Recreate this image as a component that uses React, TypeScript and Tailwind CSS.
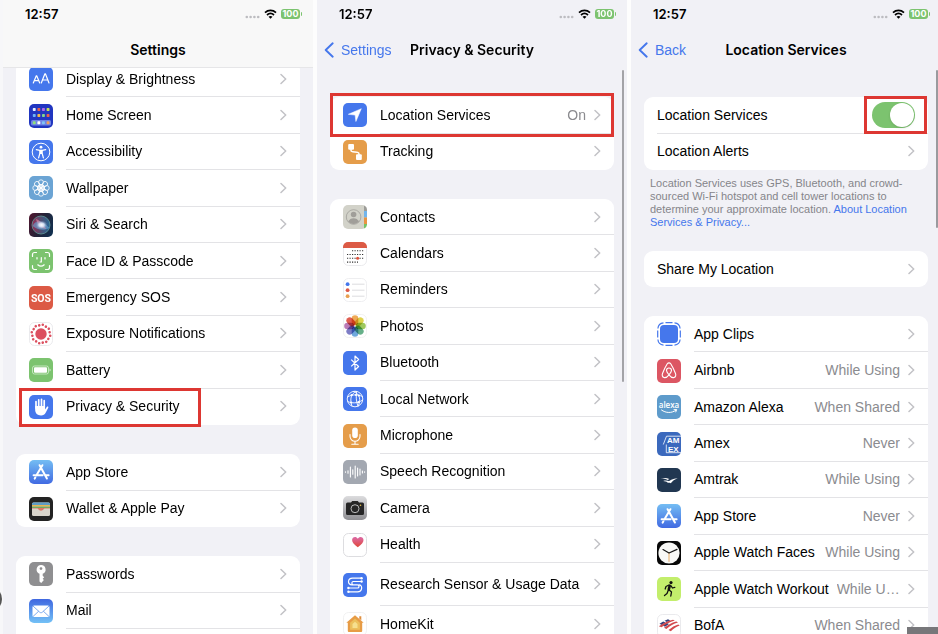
import type { ReactNode } from 'react';

const WHITE = '#ffffff';
const BLUE = '#4577ec';
const RING = [0, 45, 90, 135, 180, 225, 270, 315];

function Tile({ fill, edge, children }: { fill: string; edge?: string; children?: ReactNode }) {
  return (
    <svg viewBox="0 0 24 24" className="size-6 shrink-0 self-center" aria-hidden="true">
      <rect x={edge ? 0.5 : 0} y={edge ? 0.5 : 0} width={edge ? 23 : 24} height={edge ? 23 : 24} rx="5" fill={fill} stroke={edge ?? 'none'} strokeWidth={edge ? 0.8 : 0} />
      {children}
    </svg>
  );
}

const DisplayIcon = () => (
  <Tile fill={BLUE}>
    <g fill="none" stroke={WHITE} strokeWidth="1.2" strokeLinejoin="round" strokeLinecap="round">
      <path d="M4.3 16 7.3 8.8h.4L10.7 16M5.4 13.6h4.2" />
      <path d="M12.3 16 15.9 6.8h.5L20 16M13.5 13h5.3" />
    </g>
  </Tile>
);

const HomeScreenIcon = () => {
  const colours = ['#e8f0ff', '#e8604c', '#b06be8', '#c6e05a', '#6fb4f5', '#f2b84b', '#7fd48c', '#e8604c', '#8ee07a', '#ffffff', '#7fc4f5', '#f0a060'];
  return (
    <Tile fill="#2136c0">
      <rect x="2" y="16" width="20" height="5.6" rx="1.5" fill="#6f83e6" />
      {colours.map((c, i) => (
        <rect key={i} x={3.8 + (i % 4) * 4.6} y={[4, 10, 17.3][Math.floor(i / 4)]} width="2.9" height="2.9" rx="0.7" fill={c} />
      ))}
    </Tile>
  );
};

const AccessibilityIcon = () => (
  <Tile fill={BLUE}>
    <circle cx="12" cy="12" r="8.8" fill="none" stroke={WHITE} strokeWidth="1" />
    <circle cx="12" cy="7.2" r="1.4" fill={WHITE} />
    <path d="M7.3 9.7 10.8 10.4V13.5L9.6 17.8M16.7 9.7 13.2 10.4V13.5L14.4 17.8M10.8 10.4h2.4M10.8 13.5h2.4M12 10v3.5" fill="none" stroke={WHITE} strokeWidth="1.2" strokeLinecap="round" strokeLinejoin="round" />
  </Tile>
);

const WallpaperIcon = () => (
  <Tile fill="#6ba4d4">
    <g fill="none" stroke={WHITE} strokeWidth="0.8">
      {RING.map((a) => (
        <g key={a} transform={`rotate(${a} 12 12)`}>
          <circle cx="12" cy="6.3" r="2.5" />
          <circle cx="12" cy="10" r="1.6" />
        </g>
      ))}
    </g>
  </Tile>
);

const SiriIcon = () => (
  <svg viewBox="0 0 24 24" className="size-6 shrink-0 self-center" aria-hidden="true">
    <defs>
      <linearGradient id="siriBase" x1="0" y1="0.3" x2="1" y2="0.7">
        <stop offset="0" stopColor="#4a1830" />
        <stop offset="0.5" stopColor="#232338" />
        <stop offset="1" stopColor="#12304f" />
      </linearGradient>
      <radialGradient id="siriGlow" cx="0.5" cy="0.5" r="0.5">
        <stop offset="0" stopColor="#ffffff" />
        <stop offset="0.45" stopColor="#d8e4f6" stopOpacity="0.9" />
        <stop offset="1" stopColor="#7090c0" stopOpacity="0" />
      </radialGradient>
      <linearGradient id="siriOrb" x1="0" y1="0" x2="1" y2="0">
        <stop offset="0" stopColor="#b0305c" />
        <stop offset="0.5" stopColor="#5a5a80" />
        <stop offset="1" stopColor="#2a78ac" />
      </linearGradient>
    </defs>
    <rect width="24" height="24" rx="5" fill="url(#siriBase)" />
    <circle cx="12" cy="12" r="9" fill="url(#siriOrb)" opacity="0.8" />
    <circle cx="12" cy="12" r="9" fill="none" stroke="#5f9a98" strokeWidth="0.8" />
    <path d="M3.5 13c4-7 9-6 17 2-6 3-12 2-17-2z" fill="#6aa8d8" opacity="0.6" />
    <path d="M7 6c3 1 8 5 10 10-6-1-9-5-10-10z" fill="#e88aa8" opacity="0.6" />
    <ellipse cx="12.5" cy="12" rx="6" ry="4.5" fill="url(#siriGlow)" />
  </svg>
);

const FaceIdIcon = () => (
  <Tile fill="#7cc36f">
    <g fill="none" stroke={WHITE} strokeWidth="1.2" strokeLinecap="round" strokeLinejoin="round">
      <path d="M3.5 7.5V5.5a2 2 0 0 1 2-2h2M16.5 3.5h2a2 2 0 0 1 2 2v2M20.5 16.5v2a2 2 0 0 1-2 2h-2M7.5 20.5h-2a2 2 0 0 1-2-2v-2" />
      <path d="M8 8.5v1.5M16 8.5v1.5M12.3 8.5v4.5h-1.2M8.8 15.8c2 1.7 4.4 1.7 6.4 0" />
    </g>
  </Tile>
);

const SosIcon = () => (
  <Tile fill="#dc5a45">
    <text x="12" y="15.7" textAnchor="middle" fontSize="10.5" fontWeight="700" fill={WHITE} fontFamily="Roboto, sans-serif">SOS</text>
  </Tile>
);

const ExposureIcon = () => (
  <Tile fill={WHITE} edge="#e5e5e8">
    <circle cx="12" cy="12" r="5.7" fill="#dc4f5f" />
    {Array.from({ length: 16 }, (_, i) => (
      <circle key={i} cx="12" cy={i % 2 ? 3.2 : 2.6} r="1.3" fill="#dc4f5f" transform={`rotate(${i * 22.5 + 11} 12 12)`} />
    ))}
  </Tile>
);

const BatteryIcon = () => (
  <Tile fill="#7cc36f">
    <rect x="3.5" y="8" width="16" height="8" rx="2" fill="none" stroke="#d5edd0" strokeWidth="0.8" />
    <rect x="5" y="9.3" width="13" height="5.4" rx="1" fill={WHITE} />
    <path d="M20.7 10.5c1 .5 1 2.5 0 3z" fill={WHITE} />
  </Tile>
);

const HandIcon = () => (
  <Tile fill={BLUE}>
    <path d="M7 13V6.5M9.7 12V4.8M12.5 12V4.3M15.2 12V5.7" stroke={WHITE} strokeWidth="1.7" strokeLinecap="round" />
    <path d="M6.15 11h9.9v3.5l1.7-2.6c.7-1 2-.3 1.5.8l-2.6 5c-1 1.9-2.4 2.7-4.6 2.7-3.7 0-5.9-2.2-5.9-5.7z" fill={WHITE} />
  </Tile>
);

const AppStoreIcon = ({ id }: { id: string }) => (
  <svg viewBox="0 0 24 24" className="size-6 shrink-0 self-center" aria-hidden="true">
    <defs>
      <linearGradient id={id} x1="0" y1="0" x2="0" y2="1">
        <stop offset="0" stopColor="#74bdf3" />
        <stop offset="1" stopColor="#416ae2" />
      </linearGradient>
    </defs>
    <rect width="24" height="24" rx="5" fill={`url(#${id})`} />
    <path d="M10.6 5.2 17.9 18.5M13.4 5.2 7.3 15.5M4.6 15.2h9M17 15.2h2.6M6.3 17.6l-.6 1" fill="none" stroke={WHITE} strokeWidth="2" strokeLinecap="round" />
  </svg>
);

const WalletIcon = () => (
  <Tile fill="#232323">
    <rect x="3" y="5.5" width="18" height="13.5" rx="1.5" fill="#d9d5cc" />
    <path d="M3 7a1.5 1.5 0 0 1 1.5-1.5h15A1.5 1.5 0 0 1 21 7v1H3z" fill="#5f9cc4" />
    <path d="M3 8h18v1.5H3z" fill="#e8b450" />
    <path d="M3 9.5h18V11H3z" fill="#74a860" />
    <path d="M3 11h18v.6h-5.5c-.8 0-1 2.2-3.5 2.2s-2.7-2.2-3.5-2.2H3z" fill="#df7564" />
  </Tile>
);

const KeyIcon = () => (
  <Tile fill="#8f8f91">
    <path fillRule="evenodd" d="M12 3a4.5 4.5 0 0 1 1.7 8.7v2.1l1.5 1.5-1.5 1.4 1.2 1.3-2.7 3-1.7-1.6v-7.7A4.5 4.5 0 0 1 12 3zm0 2.2a1.4 1.4 0 1 0 0 2.8 1.4 1.4 0 0 0 0-2.8z" fill={WHITE} />
  </Tile>
);

const MailIcon = () => (
  <svg viewBox="0 0 24 24" className="size-6 shrink-0 self-center" aria-hidden="true">
    <defs>
      <linearGradient id="mailFill" x1="0" y1="0" x2="0" y2="1">
        <stop offset="0" stopColor="#3f67e0" />
        <stop offset="1" stopColor="#73c1f6" />
      </linearGradient>
    </defs>
    <rect width="24" height="24" rx="5" fill="url(#mailFill)" />
    <rect x="3.5" y="6.5" width="17" height="11.5" rx="1.5" fill={WHITE} />
    <path d="m4 7 6.7 6.2c.8.7 1.8.7 2.6 0L20 7M4 17.5l5.7-5.3M20 17.5l-5.7-5.3" fill="none" stroke="#5e95ea" strokeWidth="0.8" />
  </svg>
);

const ArrowIcon = () => (
  <Tile fill={BLUE}>
    <path d="M18.3 5.7 12.9 18.5 12.1 12.1 5.3 11.3z" fill={WHITE} stroke={WHITE} strokeWidth="0.5" strokeLinejoin="round" />
  </Tile>
);

const TrackingIcon = () => (
  <Tile fill="#e59d4a">
    <rect x="5.2" y="4" width="5.8" height="5.8" rx="1" fill={WHITE} />
    <rect x="13" y="14.2" width="5.8" height="5.8" rx="1" fill={WHITE} />
    <path d="M8 9v1.5c0 3 8 0 8 3.5V15" fill="none" stroke={WHITE} strokeWidth="1.4" />
  </Tile>
);

const ContactsIcon = () => (
  <Tile fill="#d2d2c9">
    <path d="M21 .5a4.5 4.5 0 0 1 3 4V6h-3z" fill="#9c9c98" />
    <path d="M21 6h3v6.5h-3z" fill="#72b5ec" />
    <path d="M21 12.5h3V19h-3z" fill="#e99443" />
    <path d="M21 19h3v.5a4.5 4.5 0 0 1-3 4z" fill="#74c465" />
    <circle cx="10.6" cy="12" r="7.3" fill="none" stroke="#a09e99" strokeWidth="0.8" />
    <circle cx="10.6" cy="9.5" r="2.8" fill="#a09e99" />
    <path d="M5.2 16.5c2-4.5 8.8-4.5 10.8 0-2.8 3.3-8 3.3-10.8 0z" fill="#a09e99" />
  </Tile>
);

const CalendarIcon = () => (
  <Tile fill={WHITE} edge="#e5e5e8">
    <path d="M0 6V5a5 5 0 0 1 5-5h14a5 5 0 0 1 5 5v1z" fill="#dc5a45" />
    <g stroke="#333333" strokeWidth="1.1" strokeDasharray="1.2 1.3">
      <path d="M9 8.8h11.5M4 12.5h16.5M4 16.3h16.5M4 20.1h11" />
    </g>
    <circle cx="14.6" cy="16.3" r="1.5" fill="#e0513c" />
  </Tile>
);

const RemindersIcon = () => (
  <Tile fill={WHITE} edge="#eaeaec">
    {[BLUE, '#dd5a48', '#e8a050'].map((c, i) => (
      <g key={c}>
        <circle cx="4.6" cy={6.2 + i * 6} r="1.9" fill={c} />
        <path d={`M9 ${6.2 + i * 6}h12.5`} stroke="#d4d4d8" strokeWidth="0.8" />
      </g>
    ))}
  </Tile>
);

const PhotosIcon = () => (
  <Tile fill={WHITE} edge="#eeeeee">
    {['#eda144', '#dccf3c', '#93c24c', '#55a87c', '#5f9fd8', '#706fc0', '#b36cae', '#dc4c3e'].map((c, i) => (
      <rect key={c} x="8.7" y="1.2" width="6.6" height="10" rx="3.3" fill={c} opacity="0.9" className="mix-blend-multiply" transform={`rotate(${i * 45} 12 12)`} />
    ))}
  </Tile>
);

const BluetoothIcon = () => (
  <Tile fill={BLUE}>
    <path d="m8.2 8.6 7.4 6.9-3.6 3.5V5l3.6 3.5-7.4 6.9" fill="none" stroke={WHITE} strokeWidth="1.2" strokeLinejoin="round" />
  </Tile>
);

const NetworkIcon = () => (
  <Tile fill={BLUE}>
    <g fill="none" stroke={WHITE} strokeWidth="0.9">
      <circle cx="12" cy="12" r="7.8" />
      <path d="M13.5 4.4C8 6.5 6.5 12 9 19.2M10.5 4.4c6 2 8 8.5 4.5 14.9M4.6 10c5-3 10-2.5 15-.5M4.7 14.5c4 2 10 2 15-1.5M13.5 4.4c-.5 5-.5 10 1.5 14.9" />
    </g>
    {[[8.6, 8.2], [16, 8.5], [8.2, 15.6], [15.6, 15.2], [13, 8]].map(([x, y]) => (
      <circle key={`${x}-${y}`} cx={x} cy={y} r="1.1" fill={WHITE} />
    ))}
  </Tile>
);

const MicrophoneIcon = () => (
  <Tile fill="#e59d4a">
    <rect x="9.2" y="3.5" width="5.6" height="10.5" rx="2.8" fill={WHITE} />
    <path d="M7 10.5v1.8a5 5 0 0 0 10 0v-1.8M12 17.3v2.7M8.8 20.2h6.4" fill="none" stroke={WHITE} strokeWidth="1.1" strokeLinecap="round" />
  </Tile>
);

const SpeechIcon = () => (
  <Tile fill="#a3a8b1">
    <path d="M2.5 11.8v.4M5 10.8v2.4M7.4 7v10M9.8 9.7v4.6M12.2 6v12M14.6 8v8M17 9v6M19.4 11v2M21.6 11.8v.4" stroke={WHITE} strokeWidth="1.1" strokeLinecap="round" />
  </Tile>
);

const CameraIcon = () => (
  <svg viewBox="0 0 24 24" className="size-6 shrink-0 self-center" aria-hidden="true">
    <defs>
      <linearGradient id="cameraFill" x1="0" y1="0" x2="0" y2="1">
        <stop offset="0" stopColor="#dcdcde" />
        <stop offset="1" stopColor="#8f8f93" />
      </linearGradient>
    </defs>
    <rect width="24" height="24" rx="5" fill="url(#cameraFill)" />
    <path d="M4.5 6.5H8L9.2 5h5.6L16 6.5h3.5A1.5 1.5 0 0 1 21 8v9.5a1.5 1.5 0 0 1-1.5 1.5h-15A1.5 1.5 0 0 1 3 17.5V8a1.5 1.5 0 0 1 1.5-1.5z" fill="#262626" />
    <circle cx="12" cy="12.7" r="4" fill="none" stroke="#c8c8c8" strokeWidth="0.9" />
    <circle cx="17.5" cy="9.2" r="0.8" fill="#ecc64c" />
  </svg>
);

const HealthIcon = () => (
  <svg viewBox="0 0 24 24" className="size-6 shrink-0 self-center" aria-hidden="true">
    <defs>
      <linearGradient id="heartFill" x1="0" y1="0" x2="0" y2="1">
        <stop offset="0" stopColor="#dc6aa8" />
        <stop offset="1" stopColor="#e04838" />
      </linearGradient>
    </defs>
    <rect x="0.5" y="0.5" width="23" height="23" rx="5" fill={WHITE} stroke="#d9d9dc" strokeWidth="0.9" />
    <path d="M14.8 14.2C11 11.6 9.1 9.5 9.1 7.1c0-3.3 4-4.3 5.7-1.4 1.7-2.9 5.7-1.9 5.7 1.4 0 2.4-1.9 4.5-5.7 7.1z" fill="url(#heartFill)" />
  </svg>
);

const ResearchIcon = () => (
  <Tile fill={BLUE}>
    <path d="M18.2 5.2H9.5c-5 0-5.5 6.6-.5 6.6h5.5c2 0 2 3.2 0 3.2H5.8M5.8 18.8h8.7c5 0 5.5-6.8 1.5-6.9M18.2 8.5h-8c-1.7 0-1.9 3.3.3 3.3" fill="none" stroke={WHITE} strokeWidth="1.2" strokeLinecap="round" />
    {[[18.6, 5.2], [18.6, 8.5], [5.4, 15], [5.4, 18.8]].map(([x, y]) => (
      <circle key={`${x}-${y}`} cx={x} cy={y} r="1.2" fill={WHITE} />
    ))}
  </Tile>
);

const HomeKitIcon = () => (
  <Tile fill={WHITE} edge="#eeeeee">
    <path d="M16.3 4.2h2v4l-2-1.5z" fill="#df8e3e" />
    <path d="M12 3.2 3.3 10.8h1.5V19a1 1 0 0 0 1 1h12.4a1 1 0 0 0 1-1v-8.2h1.5z" fill="#e79c46" />
    <path d="m12 6.6 4.9 4.2v7H7.1v-7z" fill="#ecc05c" />
    <path d="m12 9.8 2.5 2.2v4h-5v-4z" fill="#f6e08e" />
  </Tile>
);

const AppClipsIcon = () => (
  <svg viewBox="0 0 24 24" className="size-6 shrink-0 self-center" aria-hidden="true">
    <rect x="3" y="3" width="18" height="18" rx="4" fill={BLUE} />
    <path d="M8.5.7h7M8.5 23.3h7M.7 8.5v7M23.3 8.5v7M.9 6.5C1.2 3 3 1.2 6.5.9M17.5.9c3.5.3 5.3 2.1 5.6 5.6M23.1 17.5c-.3 3.5-2.1 5.3-5.6 5.6M6.5 23.1C3 22.8 1.2 21 .9 17.5" fill="none" stroke={BLUE} strokeWidth="1.2" />
  </svg>
);

const AirbnbIcon = () => (
  <Tile fill="#dc5663">
    <path d="M12 15.8c-1.7-2-2.5-3.3-2.5-4.3a2.5 2.5 0 0 1 5 0c0 1-.8 2.3-2.5 4.3zm0 0c-2 2.5-3.5 3.3-5 2.7-1.6-.6-2.2-2.2-1.5-4 .8-2 3.5-7.7 4.8-9.7.9-1.3 2.5-1.3 3.4 0 1.3 2 4 7.7 4.8 9.7.7 1.8.1 3.4-1.5 4-1.5.6-3-.2-5-2.7z" fill="none" stroke={WHITE} strokeWidth="1.1" />
  </Tile>
);

const AlexaIcon = () => (
  <Tile fill="#5e9bcb">
    <text x="12" y="12.5" textAnchor="middle" fontSize="8" fontWeight="600" fill={WHITE} fontFamily="'Open Sans', sans-serif">alexa</text>
    <path d="M4.5 15c4.5 3.3 10 3.3 14.5.3M17 14.7l2.7-.2-.9 2.4" fill="none" stroke={WHITE} strokeWidth="1" strokeLinecap="round" />
  </Tile>
);

const AmexIcon = () => (
  <Tile fill="#3b69bd">
    <path d="M9.5 4.2H24M6.3 12.5 9.5 4.2M9.3 12.5v8.2H24" fill="none" stroke={WHITE} strokeWidth="0.8" />
    <g fontFamily="'Liberation Sans', Arial, sans-serif" fontWeight="700" fontSize="8" fill={WHITE}>
      <text x="10" y="11">AM</text>
      <text x="11" y="19.6">EX</text>
    </g>
  </Tile>
);

const AmtrakIcon = () => (
  <Tile fill="#213751">
    <path d="M3.5 10.6c3.5-.9 6.5-.7 8.8.5l-1.5.9c-2-1-4.500-1.400-7.300-1.400zM6.200 12.900c2.300-.6 4.300-.5 6 .4l-1.300.9c-1.300-.8-2.900-1.200-4.700-1.300zM9.800 15.100c2.400-2.900 5.900-4.600 10.900-4.900-3 1.100-5.300 2.700-6.900 5.100-1.200-.5-2.500-.6-4-.2z" fill={WHITE} />
  </Tile>
);

const WatchFacesIcon = () => (
  <Tile fill="#080808">
    <circle cx="12" cy="12" r="10.6" fill="#f8f8f6" />
    <path d="M12 11.5v9.3" stroke="#e6a75a" strokeWidth="0.9" />
    <path d="M12 12 6 8.6M12 12l8-3.6" stroke="#151515" strokeWidth="1.2" strokeLinecap="round" />
  </Tile>
);

const WorkoutIcon = () => (
  <Tile fill="#c3ee6c">
    <circle cx="14" cy="5.6" r="1.6" fill="#111111" />
    <path d="M12.7 8.8 11.8 12.5" stroke="#111111" strokeWidth="2.6" strokeLinecap="round" />
    <path d="m12 8-3 1.5-.8 2.5M14 8.8l1.5 2.2 2.3-.7M12.2 13l2.3 2-.7 4M11.2 13.5l-1.2 3-2.500 2" fill="none" stroke="#111111" strokeWidth="1.3" strokeLinecap="round" strokeLinejoin="round" />
  </Tile>
);

const BofaIcon = () => (
  <Tile fill={WHITE} edge="#e5e5e8">
    <path d="m2.5 9.8 3.7-2.4 2.2 1-3.7 2.5zM7.5 6.8l3.5-1.5 2.3 1.1-3.5 1.5zM5.8 11.6l4-2.7 2.2 1.1-4 2.8z" fill="#33437f" />
    <path d="M1.8 12.2C7 9 10.5 7 16 5.7l1.8.9C12.5 8 9 10.2 4.5 13.2zM7 13.8c4.3-3 7.5-5 12.3-6.2l1.7.9c-4.5 1.3-7.8 3.3-11.6 6.5zM11.5 16c3.5-2.7 6-4.5 9.8-5.5l1.4 1c-3.4 1.2-5.9 2.9-8.900 5.700z" fill="#d3494d" />
  </Tile>
);

function Chevron() {
  return (
    <svg viewBox="0 0 7 12" className="h-3 w-[7px] shrink-0" aria-hidden="true">
      <path d="m1 1.5 4.7 4.5L1 10.5" fill="none" stroke="#c2c2c6" strokeWidth="1.5" strokeLinecap="round" strokeLinejoin="round" />
    </svg>
  );
}

function Highlight({ className }: { className: string }) {
  return <span className={`pointer-events-none absolute z-10 border-3 border-[#dd3732] ${className}`} />;
}

type RowProps = { label: string; icon?: ReactNode; value?: string; last?: boolean; tall?: boolean; mark?: string };

function Row({ label, icon, value, last, tall, mark }: RowProps) {
  return (
    <button type="button" className={`relative flex w-full gap-[13px] pl-[13px] text-left ${tall ? 'h-[43px]' : 'min-h-9'}`}>
      {icon}
      <span className={`flex min-w-0 flex-1 items-center gap-2 self-stretch border-b pr-[13px] ${last ? 'border-transparent' : 'border-[#e3e3e6]'}`}>
        <span className="flex-1 whitespace-nowrap">{label}</span>
        {value && <span className="min-w-0 truncate text-[#8b8b8f]">{value}</span>}
        <Chevron />
      </span>
      {mark && <Highlight className={mark} />}
    </button>
  );
}

function Card({ children }: { children: ReactNode }) {
  return <section className="rounded-[9px] bg-white">{children}</section>;
}

function Rows({ size, children }: { size: string; children: ReactNode }) {
  return <div className={`grid auto-rows-fr grid-cols-1 ${size}`}>{children}</div>;
}

function StatusBar() {
  return (
    <div className="flex h-7 items-center pr-[11px] pl-[22px]">
      <span className="flex-1 font-['Inter',sans-serif] text-[13px] font-semibold">12:57</span>
      <svg viewBox="0 0 15 4" className="mt-1.5 mr-1 h-1 w-[15px]" aria-hidden="true">
        {[1.8, 5.6, 9.4, 13.2].map((x) => <circle key={x} cx={x} cy="2" r="1.3" fill="#bcbcc0" />)}
      </svg>
      <svg viewBox="0 0 13 10" className="mr-1 h-2.5 w-[13px]" aria-hidden="true">
        <path d="M1 3.7c3.2-3 7.8-3 11 0M3 6c2.1-1.9 4.9-1.9 7 0" fill="none" stroke="#000000" strokeWidth="1.7" />
        <path d="M4.5 7.7c1.2-1 2.8-1 4 0l-2 2.1z" fill="#000000" />
      </svg>
      <span className="flex h-2.5 w-[19px] items-center justify-center rounded-[3px] bg-[#7cc36f] font-['Inter',sans-serif] text-[9px] leading-[10px] font-bold text-white">100</span>
      <span className="ml-px h-1 w-px rounded-r bg-[#7cc36f]" />
    </div>
  );
}

function Header({ title, back, frosted }: { title: string; back?: string; frosted?: boolean }) {
  return (
    <header className={`relative z-10 h-17 ${frosted ? 'border-b border-[#e6e6e8] bg-[#f8f8f8]' : ''}`}>
      <StatusBar />
      <div className="grid h-11 grid-cols-[1fr_auto_1fr] items-center px-[7px]">
        {back ? (
          <button type="button" className="flex items-center gap-[7px] text-[#4577ec]">
            <svg viewBox="0 0 10 16" className="h-4 w-2.5" aria-hidden="true">
              <path d="M8.7 1.3 1.7 8l7 6.7" fill="none" stroke="currentColor" strokeWidth="1.9" strokeLinecap="round" strokeLinejoin="round" />
            </svg>
            {back}
          </button>
        ) : (
          <span />
        )}
        <h1 className="font-['Inter',sans-serif] font-semibold">{title}</h1>
      </div>
    </header>
  );
}

function SettingsScreen() {
  return (
    <main className="min-w-0 bg-[#f1f1f6]">
      <Header title="Settings" frosted />
      <div className="-mt-[7px] flex flex-col gap-[29px] px-[13px]">
        <Card>
          <Rows size="min-h-[364px]">
            <Row label="Display & Brightness" icon={<DisplayIcon />} />
            <Row label="Home Screen" icon={<HomeScreenIcon />} />
            <Row label="Accessibility" icon={<AccessibilityIcon />} />
            <Row label="Wallpaper" icon={<WallpaperIcon />} />
            <Row label="Siri & Search" icon={<SiriIcon />} />
            <Row label="Face ID & Passcode" icon={<FaceIdIcon />} />
            <Row label="Emergency SOS" icon={<SosIcon />} />
            <Row label="Exposure Notifications" icon={<ExposureIcon />} />
            <Row label="Battery" icon={<BatteryIcon />} />
            <Row label="Privacy & Security" icon={<HandIcon />} last mark="-top-px -bottom-0.5 left-[3px] w-[182px]" />
          </Rows>
        </Card>
        <Card>
          <Rows size="min-h-[73px]">
            <Row label="App Store" icon={<AppStoreIcon id="storeFill" />} />
            <Row label="Wallet & Apple Pay" icon={<WalletIcon />} last />
          </Rows>
        </Card>
        <Card>
          <div className="pb-6">
            <Rows size="min-h-[73px]">
              <Row label="Passwords" icon={<KeyIcon />} />
              <Row label="Mail" icon={<MailIcon />} />
            </Rows>
          </div>
        </Card>
      </div>
    </main>
  );
}

function PrivacyScreen() {
  return (
    <main className="relative min-w-0 bg-[#f1f1f6]">
      <Header title="Privacy & Security" back="Settings" />
      <div className="flex flex-col gap-[29px] px-[13px] pt-[29px]">
        <Card>
          <Rows size="min-h-[73px]">
            <Row label="Location Services" value="On" icon={<ArrowIcon />} mark="inset-x-0 -top-1 -bottom-[3px]" />
            <Row label="Tracking" icon={<TrackingIcon />} last />
          </Rows>
        </Card>
        <Card>
          <Rows size="min-h-[364px]">
            <Row label="Contacts" icon={<ContactsIcon />} />
            <Row label="Calendars" icon={<CalendarIcon />} />
            <Row label="Reminders" icon={<RemindersIcon />} />
            <Row label="Photos" icon={<PhotosIcon />} />
            <Row label="Bluetooth" icon={<BluetoothIcon />} />
            <Row label="Local Network" icon={<NetworkIcon />} />
            <Row label="Microphone" icon={<MicrophoneIcon />} />
            <Row label="Speech Recognition" icon={<SpeechIcon />} />
            <Row label="Camera" icon={<CameraIcon />} />
            <Row label="Health" icon={<HealthIcon />} />
          </Rows>
          <Row label="Research Sensor & Usage Data" icon={<ResearchIcon />} tall />
          <Row label="HomeKit" icon={<HomeKitIcon />} />
        </Card>
      </div>
      <div className="absolute top-[70px] right-[3px] h-[312px] w-0.5 rounded-full bg-[#a3a3a7]" />
    </main>
  );
}

function LocationScreen() {
  return (
    <main className="relative min-w-0 bg-[#f1f1f6]">
      <Header title="Location Services" back="Back" />
      <div className="flex flex-col gap-[29px] px-[13px] pt-[29px]">
        <div>
          <Card>
            <Rows size="min-h-[73px]">
              <div className="flex pl-[13px]">
                <div className="flex flex-1 items-center border-b border-[#e3e3e6] pr-[13px]">
                  <label htmlFor="location-services" className="flex-1">Location Services</label>
                  <span className="relative flex">
                    <input
                      id="location-services"
                      type="checkbox"
                      role="switch"
                      defaultChecked
                      className="h-[26px] w-[43px] appearance-none rounded-full bg-[#d8d8dc] before:mt-px before:ml-px before:block before:size-6 before:rounded-full before:bg-white before:shadow checked:bg-[#7cc36f] checked:before:ml-[18px]"
                    />
                    <Highlight className="-inset-y-1.5 -right-3 -left-2" />
                  </span>
                </div>
              </div>
              <Row label="Location Alerts" last />
            </Rows>
          </Card>
          <p className="px-1.5 pt-[7px] text-[11px] leading-[13px] text-[#85858a]">
            Location Services uses GPS, Bluetooth, and crowd-
            <br />
            sourced Wi-Fi hotspot and cell tower locations to
            <br />
            determine your approximate location.{' '}
            <a href="#about" className="text-[#4577ec]">About Location<br />Services &amp; Privacy...</a>
          </p>
        </div>
        <div className="-mt-[7px]">
          <Card>
            <Row label="Share My Location" last />
          </Card>
        </div>
        <Card>
          <Rows size="min-h-[328px]">
            <Row label="App Clips" icon={<AppClipsIcon />} />
            <Row label="Airbnb" value="While Using" icon={<AirbnbIcon />} />
            <Row label="Amazon Alexa" value="When Shared" icon={<AlexaIcon />} />
            <Row label="Amex" value="Never" icon={<AmexIcon />} />
            <Row label="Amtrak" value="While Using" icon={<AmtrakIcon />} />
            <Row label="App Store" value="Never" icon={<AppStoreIcon id="storeFillSmall" />} />
            <Row label="Apple Watch Faces" value="While Using" icon={<WatchFacesIcon />} />
            <Row label="Apple Watch Workout" value="While Using" icon={<WorkoutIcon />} />
            <Row label="BofA" value="When Shared" icon={<BofaIcon />} />
          </Rows>
        </Card>
      </div>
      <div className="absolute top-[70px] right-[3px] h-[158px] w-0.5 rounded-full bg-[#9a9a9e]" />
    </main>
  );
}

export default function App() {
  return (
    <div className="relative h-screen overflow-hidden bg-[#f7f7f9] pl-[3px] font-['Liberation_Sans',Arial,sans-serif] text-sm text-black">
      <div className="-mr-[3px] grid min-h-full grid-cols-3 gap-1 bg-[#fdfdfd]">
        <SettingsScreen />
        <PrivacyScreen />
        <LocationScreen />
      </div>
      <div className="absolute top-[586px] -left-6 size-[26px] rounded-full bg-[#555555]" />
      <div className="absolute right-0 bottom-0 h-[7px] w-[31px] bg-[#77777a]" />
    </div>
  );
}
